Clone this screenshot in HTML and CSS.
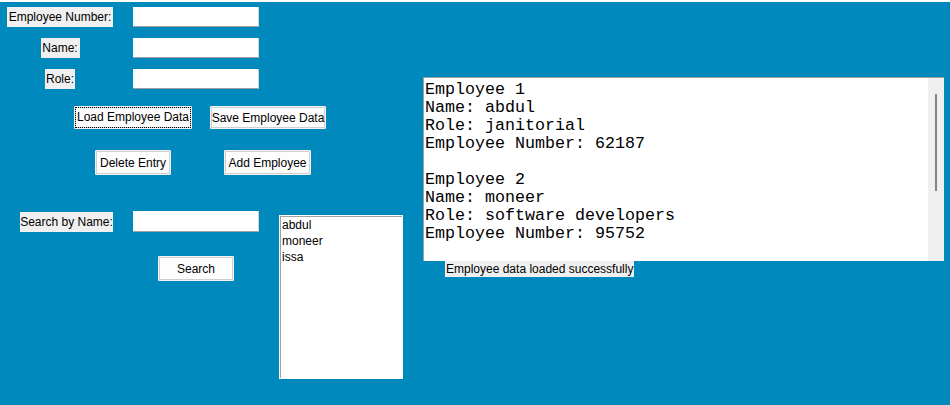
FILE: index.html
```html
<!DOCTYPE html>
<html>
<head>
<meta charset="utf-8">
<link rel="stylesheet" href="styles.css">
</head>
<body>
<div class="app">
  <div class="form">
    <div class="row row-1">
      <div class="cell-label"><span class="label w-num">Employee Number:</span></div>
      <div class="entry"></div>
    </div>
    <div class="row row-2">
      <div class="cell-label"><span class="label w-name">Name:</span></div>
      <div class="entry"></div>
    </div>
    <div class="row row-3">
      <div class="cell-label"><span class="label w-role">Role:</span></div>
      <div class="entry"></div>
    </div>
    <div class="row row-4">
      <button class="btn btn-load"><span class="focus">Load Employee Data</span></button>
      <button class="btn btn-save">Save Employee Data</button>
    </div>
    <div class="row row-5">
      <button class="btn btn-delete">Delete Entry</button>
      <button class="btn btn-add">Add Employee</button>
    </div>
    <div class="row row-6">
      <span class="label w-search">Search by Name:</span>
      <div class="entry entry-search"></div>
    </div>
    <div class="row row-7">
      <button class="btn btn-search">Search</button>
    </div>
  </div>
  <div class="listbox">
    <div class="item">abdul</div>
    <div class="item">moneer</div>
    <div class="item">issa</div>
  </div>
  <div class="output">
    <div class="textarea">
      <pre class="text">Employee 1
Name: abdul
Role: janitorial
Employee Number: 62187

Employee 2
Name: moneer
Role: software developers
Employee Number: 95752</pre>
      <div class="scrollbar"><div class="thumb"></div></div>
    </div>
    <div class="status">Employee data loaded successfully</div>
  </div>
</div>
</body>
</html>
```
FILE: styles.css
```css
html, body {
  margin: 0;
  padding: 0;
}
body {
  width: 950px;
  height: 405px;
  overflow: hidden;
  background: #0089bc;
  font-family: "Liberation Sans", Arial, sans-serif;
  font-size: 12px;
  color: #000;
}
.app {
  border-top: 2px solid #ffffff;
  height: 403px;
  display: flex;
  align-items: flex-start;
}
.form {
  width: 279px;
  flex: none;
  display: flex;
  flex-direction: column;
}
.row {
  display: flex;
  align-items: center;
}
.row > * { flex: none; }
.row-1 { margin-top: 5px; height: 20px; }
.row-2 { margin-top: 11px; height: 20px; }
.row-3 { margin-top: 11px; height: 20px; }
.row-4 { margin-top: 17px; height: 23px; }
.row-5 { margin-top: 21px; height: 25px; }
.row-6 { margin-top: 36px; height: 21px; }
.row-7 { margin-top: 24px; height: 25px; }

.cell-label {
  width: 120px;
  display: flex;
  justify-content: center;
  margin-right: 13px;
}
.label {
  display: block;
  height: 20px;
  line-height: 20px;
  background: #f0f0f0;
  text-align: center;
  white-space: nowrap;
}
.w-num { width: 106px; }
.w-name { width: 39px; }
.w-role { width: 30px; }
.w-search { width: 93px; margin-left: 20px; margin-right: 20px; }

.entry {
  width: 125px;
  height: 19px;
  background: #ffffff;
  border-bottom: 1px solid #a0a0a0;
  border-right: 1px solid #d4d4d4;
  box-sizing: content-box;
}
.entry-search { height: 20px; }

.btn {
  font-family: "Liberation Sans", Arial, sans-serif;
  font-size: 12px;
  color: #000;
  background: #fdfdfd;
  border: 1px solid #f4f4f4;
  border-radius: 1px;
  box-shadow: inset 0 0 0 1px #cfcfcf;
  padding: 0;
  margin: 0;
  height: 100%;
  display: flex;
  align-items: center;
  justify-content: center;
  white-space: nowrap;
  box-sizing: border-box;
}
.btn-load { width: 118px; margin-left: 74px; }
.btn-save { width: 116px; margin-left: 18px; }
.btn-delete { width: 76px; margin-left: 95px; }
.btn-add { width: 87px; margin-left: 53px; }
.btn-search { width: 76px; margin-left: 158px; }
.focus {
  display: block;
  outline: 1px dotted #000;
  outline-offset: 0;
  padding: 2px 1px;
  line-height: 15px;
}

.listbox {
  flex: none;
  margin-top: 213px;
  width: 124px;
  height: 164px;
  box-sizing: border-box;
  background: #ffffff;
  border: 1px solid #ffffff;
  box-shadow: inset 1px 1px 0 0 #a0a0a0;
  padding: 1px 0 0 2px;
}
.item {
  line-height: 16px;
  height: 16px;
  white-space: nowrap;
}

.output {
  flex: none;
  margin-top: 75px;
  margin-left: 20px;
  display: flex;
  flex-direction: column;
}
.textarea {
  width: 521px;
  height: 184px;
  box-sizing: border-box;
  background: #ffffff;
  border-top: 1px solid #a0a0a0;
  border-left: 1px solid #a0a0a0;
  display: flex;
}
.text {
  flex: 1;
  margin: 0;
  padding: 3px 0 0 1px;
  font-family: "Liberation Mono", "Courier New", monospace;
  font-size: 16.67px;
  line-height: 18px;
  color: #000;
  white-space: pre;
  overflow: hidden;
}
.scrollbar {
  width: 16px;
  flex: none;
  background: #f0f0f0;
  display: flex;
  justify-content: center;
}
.thumb {
  margin-top: 16px;
  width: 2px;
  height: 97px;
  background: #858585;
}
.status {
  margin-left: 22px;
  align-self: flex-start;
  height: 16px;
  line-height: 16px;
  padding: 0 1px;
  background: #f0f0f0;
  white-space: nowrap;
}
```
